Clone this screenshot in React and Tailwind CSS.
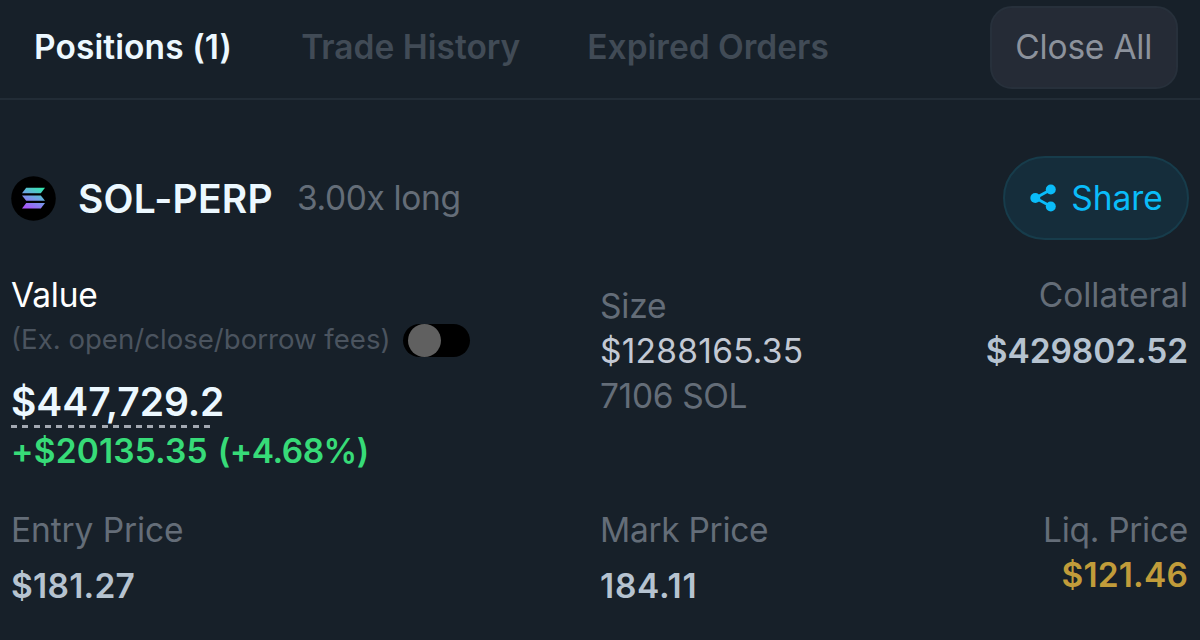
import React from "react";

function Tab({ active, children }) {
  return (
    <button className={"text-[33.5px] leading-[44px] font-semibold whitespace-nowrap " + (active ? "tracking-[0.1px] text-[#ecf8ff]" : "text-[#414b56]")}>
      {children}
    </button>
  );
}

function SolanaLogo() {
  return (
    <svg viewBox="0 0 45 45" className="size-[45px] shrink-0">
      <defs>
        <linearGradient id="sol" gradientUnits="userSpaceOnUse" x1="28" y1="11" x2="18" y2="33">
          <stop offset="0" stopColor="#35e8b0" />
          <stop offset="0.5" stopColor="#729fe6" />
          <stop offset="1" stopColor="#a855fa" />
        </linearGradient>
      </defs>
      <circle cx="22.5" cy="22.5" r="22.3" fill="#000" />
      <g fill="url(#sol)">
        <path d="M15.2 11.7h18.8l-4.2 5.6H11z" />
        <path d="M11 19.4h18.8l4.2 5.4H15.2z" />
        <path d="M15.2 27h18.8l-4.2 5.6H11z" />
      </g>
    </svg>
  );
}

function ShareIcon() {
  return (
    <svg viewBox="0 0 28 28" className="size-7 shrink-0" fill="#0abcf9">
      <path d="M22 5.5 6.5 14 22 22.5" fill="none" stroke="#0abcf9" strokeWidth="2.8" />
      <circle cx="21.8" cy="5.5" r="5" />
      <circle cx="6.3" cy="14" r="5" />
      <circle cx="21.8" cy="22.5" r="5" />
    </svg>
  );
}

function Toggle() {
  return (
    <span className="flex h-[33px] w-[67px] shrink-0 items-center rounded-full bg-black pl-[5px]">
      <span className="size-[33px] rounded-full bg-[#606060]" />
    </span>
  );
}

export default function App() {
  return (
    <main className="h-[640px] w-[1200px] overflow-hidden bg-[#172029] font-['Inter',sans-serif] text-[33.5px] leading-[45px] font-normal text-[#646d78]">
      <header className="flex h-[100px] items-start justify-between border-b-2 border-[#222c36] pt-[5px] pr-[22.5px] pl-[34px]">
        <nav className="flex pt-5">
          <Tab active>Positions (1)</Tab>
          <span className="w-[69px]" />
          <Tab>Trade History</Tab>
          <span className="w-[67px]" />
          <Tab>Expired Orders</Tab>
        </nav>
        <button className="mt-px h-[83px] w-[187.5px] rounded-[22px] border-2 border-[#27303b] bg-[#252b36] tracking-[-0.2px] text-[#8c929c]">Close All</button>
      </header>

      <section className="pr-3 pl-[11px]">
        <div className="mt-14 flex h-[84px] items-center">
          <SolanaLogo />
          <h1 className="ml-[22px] text-[39px] font-semibold tracking-[0.25px] text-[#ecf8ff]">SOL-PERP</h1>
          <span className="ml-[24px] tracking-[-0.35px]">3.00x long</span>
          <button className="-mr-px ml-auto flex h-[84px] w-[186px] items-center justify-center gap-[14px] rounded-full border-2 border-[#173c4b] bg-[#152d3b] text-[#0abcf9]">
            <ShareIcon />
            Share
          </button>
        </div>

        <div className="mt-[33px] grid grid-cols-[589px_1fr_auto]">
          <div>
            <div className="tracking-[-0.2px] text-white">Value</div>
            <div className="flex h-[45px] items-center gap-[12px] text-[27.6px] text-[#4b545f]">
              <span className="pb-[2px]">(Ex. open/close/borrow fees)</span>
              <Toggle />
            </div>
            <div className="mt-[9px] h-[56px] w-[199px] bg-[repeating-linear-gradient(90deg,#a3a9b2_0_6px,transparent_6px_11.35px)] bg-[length:100%_3px] bg-bottom bg-no-repeat text-[39px] leading-[60px] font-semibold tracking-[-0.05px] whitespace-nowrap text-[#ecf8ff]">
              $447,729.2
            </div>
            <div className="flex gap-[10px] pt-px font-semibold text-[#37db78]">
              <span className="tracking-[0.15px]">+$20135.35</span>
              <span className="tracking-[-0.5px]">(+4.68%)</span>
            </div>
          </div>
          <div className="pt-[11px]">
            <div className="tracking-[-0.2px]">Size</div>
            <div className="tracking-[0.25px] text-[#c3c9d4]">$1288165.35</div>
            <div className="tracking-[-0.35px]">7106 SOL</div>
          </div>
          <div className="text-right">
            <div>Collateral</div>
            <div className="mt-[11px] font-semibold tracking-[-0.1px] text-[#b6c3d0]">$429802.52</div>
          </div>
        </div>

        <div className="mt-[34px] grid grid-cols-[589px_1fr_auto]">
          <div>
            <div className="tracking-[-0.1px]">Entry Price</div>
            <div className="mt-[11px] font-semibold tracking-[0.25px] text-[#b6c3d0]">$181.27</div>
          </div>
          <div>
            <div className="tracking-[-0.3px]">Mark Price</div>
            <div className="mt-[11px] font-semibold tracking-[0.75px] text-[#b6c3d0]">184.11</div>
          </div>
          <div className="text-right">
            <div className="tracking-[-0.3px]">Liq. Price</div>
            <div className="font-semibold tracking-[0.15px] text-[#c19c3a]">$121.46</div>
          </div>
        </div>
      </section>
    </main>
  );
}
